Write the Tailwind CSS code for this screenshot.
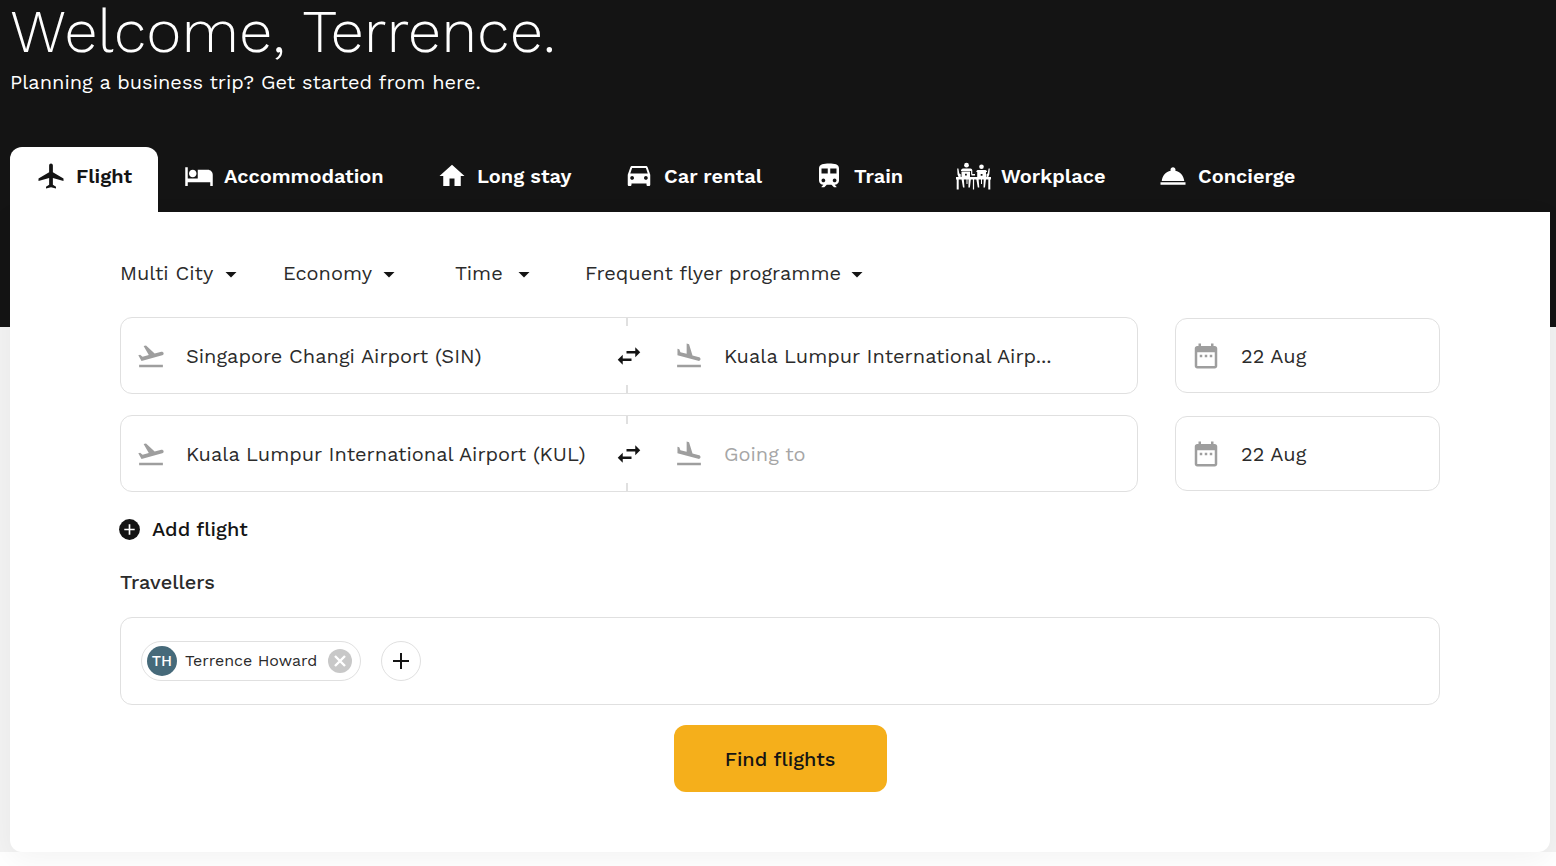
<!DOCTYPE html>
<html lang="en">
<head>
<meta charset="utf-8">
<meta name="viewport" content="width=device-width, initial-scale=1">
<title>Business travel</title>
<script src="https://cdn.jsdelivr.net/npm/@tailwindcss/browser@4"></script>
</head>
<body class="min-h-screen bg-white pb-3.5 font-['Work_Sans',Inter,sans-serif] text-[#141414]">
<svg class="hidden" aria-hidden="true">
  <symbol id="caret" viewBox="0 0 12 6"><path d="M.5 0h11L6 5.500z"/></symbol>
  <symbol id="takeoff" viewBox="0 0 24 24"><path d="M2.5 19h19v2h-19zM22.07 9.64c-.21-.8-1.04-1.28-1.84-1.06L14.92 10l-6.9-6.43-1.93.51 4.14 7.17-4.97 1.33-1.97-1.54-1.45.39 2.59 4.49L21 11.49c.81-.23 1.28-1.05 1.07-1.85z"/></symbol>
  <symbol id="land" viewBox="0 0 24 24"><path d="M2.500 19h19v2h-19zM19.340 15.850c.8.210 1.620-.260 1.840-1.060.210-.8-.260-1.620-1.060-1.840l-5.310-1.420-2.760-9.020L10.120 2v8.280L5.150 8.950l-.93-2.320-1.450-.39v5.170l16.570 4.440z"/></symbol>
  <symbol id="swap" viewBox="0 0 24 24"><path d="M6.990 11L3 15l3.990 4v-3H14v-2H6.990v-3zM21 9l-3.990-4v3H10v2h7.010v3L21 9z"/></symbol>
  <symbol id="calendar" viewBox="0 0 24 24"><path d="M9 11H7v2h2v-2zm4 0h-2v2h2v-2zm4 0h-2v2h2v-2zm2-7h-1V2h-2v2H8V2H6v2H5c-1.110 0-1.990.9-1.990 2L3 20c0 1.100.89 2 2 2h14c1.100 0 2-.9 2-2V6c0-1.100-.9-2-2-2zm0 16H5V9h14v11z"/></symbol>
</svg>

<main class="bg-[linear-gradient(#141414_327px,#f3f3f3_327px)] pl-2.5 pr-1.5">
  <h1 class="text-[60px] font-light leading-[64px] text-white">Welcome, Terrence.</h1>
  <p class="text-[20px] leading-9 text-white">Planning a business trip? Get started from here.</p>

  <nav class="mt-[47px] flex text-[20px] font-semibold text-white" aria-label="Booking type">
    <button class="flex h-[65px] w-[148px] items-start gap-2.5 rounded-t-xl bg-white pl-[26px] pt-3.5 leading-[30px] whitespace-nowrap text-[#141414]"><svg class="size-[30px] shrink-0" viewBox="0 0 24 24" fill="currentColor"><path d="M22 16v-2l-8.500-5V3.500c0-.83-.67-1.500-1.500-1.500s-1.500.67-1.500 1.500V9L2 14v2l8.500-2.500V19L8 20.500V22l4-1 4 1v-1.500L13.500 19v-5.500L22 16z"/></svg>Flight</button>
    <button class="flex h-[65px] w-[253px] items-start gap-2.5 pl-[26px] pt-3.5 leading-[30px] whitespace-nowrap"><svg class="size-[30px] shrink-0" viewBox="0 0 24 24" fill="currentColor"><path d="M7 13c1.660 0 3-1.340 3-3S8.660 7 7 7s-3 1.340-3 3 1.340 3 3 3zm12-6h-8v7H3V5H1v15h2v-3h18v3h2v-9c0-2.210-1.790-4-4-4z"/></svg>Accommodation</button>
    <button class="flex h-[65px] w-[187px] items-start gap-2.5 pl-[26px] pt-3.5 leading-[30px] whitespace-nowrap"><svg class="size-[30px] shrink-0" viewBox="0 0 24 24" fill="currentColor"><path d="M10 20v-6h4v6h5v-8h3L12 3 2 12h3v8z"/></svg>Long stay</button>
    <button class="flex h-[65px] w-[190px] items-start gap-2.5 pl-[26px] pt-3.5 leading-[30px] whitespace-nowrap"><svg class="size-[30px] shrink-0" viewBox="0 0 24 24" fill="currentColor"><path d="M18.920 5.010C18.720 4.420 18.160 4 17.500 4h-11c-.66 0-1.210.42-1.420 1.010L3 11v8c0 .55.45 1 1 1h1c.55 0 1-.45 1-1v-1h12v1c0 .55.45 1 1 1h1c.55 0 1-.45 1-1v-8l-2.080-5.990zM6.500 15c-.83 0-1.500-.67-1.500-1.500S5.670 12 6.500 12s1.500.67 1.500 1.500S7.330 15 6.500 15zm11 0c-.83 0-1.500-.67-1.500-1.500s.67-1.500 1.500-1.500 1.500.67 1.500 1.500-.67 1.500-1.500 1.500zM5 10l1.500-4.500h11L19 10H5z"/></svg>Car rental</button>
    <button class="flex h-[65px] w-[142px] items-start gap-2.5 pl-[26px] pt-3.5 leading-[30px] whitespace-nowrap"><svg class="size-[30px] shrink-0" viewBox="0 0 24 24" fill="currentColor"><path d="M12 2c-4 0-8 .5-8 4v9.500C4 17.430 5.570 19 7.500 19L6 20.500v.5h2.230l2-2H14l2 2h2v-.5L16.500 19c1.930 0 3.500-1.570 3.500-3.500V6c0-3.500-3.580-4-8-4zM7.500 17c-.83 0-1.500-.67-1.500-1.500S6.670 14 7.500 14s1.500.67 1.500 1.500S8.330 17 7.500 17zm3.500-7H6V6h5v4zm2 0V6h5v4h-5zm3.500 7c-.83 0-1.500-.67-1.500-1.500s.67-1.500 1.500-1.500 1.500.67 1.500 1.500-.67 1.500-1.500 1.500z"/></svg>Train</button>
    <button class="flex h-[65px] w-[202px] items-start gap-2.5 pl-[26px] pt-3.5 leading-[30px] whitespace-nowrap"><svg class="h-[30px] w-[35px] shrink-0" viewBox="0 0 35 30" fill="currentColor"><circle cx="10.500" cy="4.200" r="2.400"/><circle cx="25.500" cy="5.700" r="2.300"/><path d="M0 16h35v2.400H0zM.7 18h2v10.500h-2zM16.900 18h1.200v10.500h-1.200zM32.300 18h2v10.500h-2z"/><path d="M7 7.500h7.500q1.800 0 1.800 1.800v4.200h-1.200V10H5V9.300q.5-1.800 2-1.800zM21.500 9h8q1.500.5 1.700 2h-11q.2-1.500 1.300-2z"/><path fill-rule="evenodd" d="M5.500 10.500h8.500V17H5.500zM9 12.700v1.800h1.800v-1.800zM21.200 10.800h8.800V17h-8.800zM24.700 12.900v1.800h1.800v-1.800z"/><path d="M1.200 7.500h1.200l.9 5 1.400.8V16H2.500l-1-2.500zM33.800 7.500h-1.200l-.9 5-1.200.8V16h1.800l1-2.500zM15.500 13h3.500v1.500h-3.500zM5.500 18h2.300l.7 8.500H7zM10.500 18h1v5h-1zM12.600 18h2.300l-1 8.500h-1.500zM20.300 18h2.300l.7 8.500h-1.500zM25 18h1v5h-1zM27.700 18H30l-1 8.500h-1.500z"/></svg>Workplace</button>
    <button class="flex h-[65px] w-[190px] items-start gap-2.5 pl-[26px] pt-3.5 leading-[30px] whitespace-nowrap"><svg class="size-[30px] shrink-0" viewBox="0 0 24 24" fill="currentColor"><path d="M2 17h20v2H2zm11.840-9.210c.1-.24.160-.51.160-.79 0-1.100-.9-2-2-2s-2 .9-2 2c0 .28.060.55.160.79C6.250 8.600 3.270 11.930 3 16h18c-.27-4.070-3.250-7.400-7.160-8.210z"/></svg>Concierge</button>
  </nav>

  <form class="rounded-b-xl bg-white px-[110px] pb-[60px] pt-[46px] shadow-[0_8px_30px_rgba(0,0,0,0.05)]" onsubmit="return false">
    <div class="flex text-[20px] text-[#2b2b2b]">
      <label class="relative mr-[46px] w-[117px]"><select aria-label="Trip type" class="h-[30px] w-full appearance-none bg-transparent"><option>Multi City</option></select><svg class="pointer-events-none absolute right-0 top-[14px] h-[6px] w-3 fill-[#141414]"><use href="#caret"/></svg></label>
      <label class="relative mr-[60px] w-[112px]"><select aria-label="Cabin class" class="h-[30px] w-full appearance-none bg-transparent"><option>Economy</option></select><svg class="pointer-events-none absolute right-0 top-[14px] h-[6px] w-3 fill-[#141414]"><use href="#caret"/></svg></label>
      <label class="relative mr-[55px] w-[75px]"><select aria-label="Time" class="h-[30px] w-full appearance-none bg-transparent"><option>Time</option></select><svg class="pointer-events-none absolute right-0 top-[14px] h-[6px] w-3 fill-[#141414]"><use href="#caret"/></svg></label>
      <label class="relative w-[278px]"><select aria-label="Frequent flyer programme" class="h-[30px] w-full appearance-none bg-transparent"><option>Frequent flyer programme</option></select><svg class="pointer-events-none absolute right-0 top-[14px] h-[6px] w-3 fill-[#141414]"><use href="#caret"/></svg></label>
    </div>

    <div class="mt-[29px] flex flex-col gap-[21px] text-[20px] text-[#2b2b2b]">
      <div class="flex items-center gap-[37px]">
        <div class="grid h-[77px] min-w-0 flex-1 grid-cols-[1fr_30px_1fr] rounded-xl border border-[#e0e0e0]">
          <label class="flex min-w-0 items-center gap-5 pl-[15px]"><svg class="size-[30px] shrink-0 fill-[#9e9e9e]"><use href="#takeoff"/></svg><input aria-label="Leaving from" class="w-full min-w-0 text-ellipsis outline-none" value="Singapore Changi Airport (SIN)"></label>
          <div class="flex flex-col justify-between"><span class="ml-3 h-2 w-0.5 bg-[#e0e0e0]"></span><button type="button" aria-label="Swap"><svg class="size-[30px] fill-[#141414]"><use href="#swap"/></svg></button><span class="ml-3 h-2 w-0.5 bg-[#e0e0e0]"></span></div>
          <label class="flex min-w-0 items-center gap-5 pl-[30px]"><svg class="size-[30px] shrink-0 fill-[#9e9e9e]"><use href="#land"/></svg><input aria-label="Going to" class="w-full min-w-0 text-ellipsis outline-none" value="Kuala Lumpur International Airp..."></label>
        </div>
        <label class="flex h-[75px] w-[265px] items-center gap-5 rounded-xl border border-[#e0e0e0] pl-[15px]"><svg class="size-[30px] shrink-0 fill-[#9e9e9e]"><use href="#calendar"/></svg><input aria-label="Departure date" class="w-full min-w-0 outline-none" value="22 Aug"></label>
      </div>
      <div class="flex items-center gap-[37px]">
        <div class="grid h-[77px] min-w-0 flex-1 grid-cols-[1fr_30px_1fr] rounded-xl border border-[#e0e0e0]">
          <label class="flex min-w-0 items-center gap-5 pl-[15px]"><svg class="size-[30px] shrink-0 fill-[#9e9e9e]"><use href="#takeoff"/></svg><input aria-label="Leaving from" class="w-full min-w-0 text-ellipsis outline-none" value="Kuala Lumpur International Airport (KUL)"></label>
          <div class="flex flex-col justify-between"><span class="ml-3 h-2 w-0.5 bg-[#e0e0e0]"></span><button type="button" aria-label="Swap"><svg class="size-[30px] fill-[#141414]"><use href="#swap"/></svg></button><span class="ml-3 h-2 w-0.5 bg-[#e0e0e0]"></span></div>
          <label class="flex min-w-0 items-center gap-5 pl-[30px]"><svg class="size-[30px] shrink-0 fill-[#9e9e9e]"><use href="#land"/></svg><input aria-label="Going to" class="w-full min-w-0 outline-none placeholder:text-[#a6a6a6]" placeholder="Going to"></label>
        </div>
        <label class="flex h-[75px] w-[265px] items-center gap-5 rounded-xl border border-[#e0e0e0] pl-[15px]"><svg class="size-[30px] shrink-0 fill-[#9e9e9e]"><use href="#calendar"/></svg><input aria-label="Departure date" class="w-full min-w-0 outline-none" value="22 Aug"></label>
      </div>
    </div>

    <button type="button" class="-ml-[3px] mt-[22px] flex h-[30px] items-center gap-2.5 text-[20px] font-medium"><svg class="size-[25px] fill-[#141414]" viewBox="0 0 24 24"><circle cx="12" cy="12" r="10"/><path d="M12 7v10M7 12h10" stroke="#fff" stroke-width="1.600"/></svg>Add flight</button>

    <h2 class="mt-[23px] text-[20px] font-medium leading-[30px] text-[#2b2b2b]">Travellers</h2>
    <div class="mt-5 flex h-[88px] items-center gap-5 rounded-xl border border-[#e0e0e0] px-5">
      <div class="flex h-10 w-[220px] items-center rounded-full border border-[#e0e0e0] px-[5px] pr-2">
        <span class="flex size-[30px] shrink-0 items-center justify-center rounded-full bg-[#466a7a] text-[15px] font-medium text-white">TH</span>
        <span class="ml-2 flex-1 whitespace-nowrap text-[16px] text-[#2b2b2b]">Terrence Howard</span>
        <button type="button" aria-label="Remove Terrence Howard"><svg class="size-6" viewBox="0 0 24 24"><circle cx="12" cy="12" r="12" fill="#c8c8c8"/><path d="M7 7l10 10M17 7L7 17" stroke="#fff" stroke-width="2.400"/></svg></button>
      </div>
      <button type="button" aria-label="Add traveller" class="flex size-10 items-center justify-center rounded-full border border-[#e0e0e0]"><svg class="size-4" viewBox="0 0 16 16" stroke="#141414" stroke-width="2"><path d="M8 0v16M0 8h16"/></svg></button>
    </div>

    <button class="mx-auto mt-5 block h-[67px] w-[213px] rounded-xl bg-[#f5af1b] text-[20px] font-medium">Find flights</button>
  </form>
</main>
</body>
</html>
